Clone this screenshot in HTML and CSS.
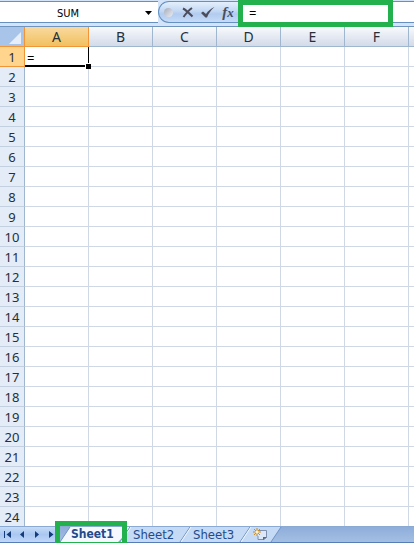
FILE: index.html
```html
<!DOCTYPE html>
<html lang="en">
<head>
    <meta charset="UTF-8">
    <meta name="viewport" content="width=device-width, initial-scale=1.0">
    <title>Spreadsheet</title>
    <link rel="stylesheet" href="styles.css">
    <script src="script.js" defer></script>
</head>
<body>

<div class="formula-bar">
    <div class="name-box">
        <select class="name-select" aria-label="Function">
            <option>SUM</option>
        </select>
        <svg class="name-arrow" width="7" height="4" viewBox="0 0 7 4"><path d="M0 0h7L3.500 4z" fill="#000"/></svg>
    </div>
    <div class="formula-tools">
        <span class="knob"></span>
        <button type="button" aria-label="Cancel">
            <svg width="12" height="11" viewBox="0 0 12 11"><path d="M1 1.500C4 3 7 6 10.500 9.500M10 1C7 3 4 6.500 1.500 10" fill="none" stroke="#4c4c5c" stroke-width="2"/></svg>
        </button>
        <button type="button" aria-label="Enter">
            <svg width="14" height="11" viewBox="0 0 14 11"><path d="M0 6l2-1.500 3 2.500C7 4 10 1.500 13.500 0 10 3 7.500 6.500 6 10.500H4.500z" fill="#4c4c5c"/></svg>
        </button>
        <button type="button" class="fx" aria-label="Insert function">f<small>x</small></button>
    </div>
    <div class="formula-field">
        <input type="text" class="formula-input" aria-label="Formula" value="=">
        <span class="mark mark-formula"></span>
    </div>
</div>

<div class="sheet">
    <table>
        <thead>
            <tr>
                <th class="corner"><svg width="12" height="12" viewBox="0 0 12 12"><path d="M12 0v12H0z" fill="#e6eefa"/></svg></th>
                <th class="active">A</th>
                <th>B</th>
                <th>C</th>
                <th>D</th>
                <th>E</th>
                <th>F</th>
                <th></th>
            </tr>
        </thead>
        <tbody id="gridBody"></tbody>
    </table>
</div>

<div class="tab-bar">
    <div class="tab-nav">
        <button type="button" aria-label="First sheet"><svg width="9" height="7" viewBox="0 0 9 7"><path d="M1 0h1v7H1zM8 0v7L3.500 3.500z" fill="#123c7c"/></svg></button>
        <button type="button" aria-label="Previous sheet"><svg width="9" height="7" viewBox="0 0 9 7"><path d="M6 0v7L2 3.500z" fill="#123c7c"/></svg></button>
        <button type="button" aria-label="Next sheet"><svg width="9" height="7" viewBox="0 0 9 7"><path d="M2 0v7l4-3.500z" fill="#123c7c"/></svg></button>
        <button type="button" aria-label="Last sheet"><svg width="9" height="7" viewBox="0 0 9 7"><path d="M1 0v7l4.500-3.500zM7 0h1v7H7z" fill="#123c7c"/></svg></button>
    </div>
    <button type="button" class="tab tab-active">
        <svg class="tab-shape" viewBox="0 0 70 15"><path class="fill" d="M0 15L10 0h60L60 15z"/><path class="edge" d="M0 15L10 0"/><path class="fold" d="M63 10v5h-5z"/></svg>
        <span>Sheet1</span>
    </button>
    <button type="button" class="tab">
        <svg class="tab-shape" viewBox="0 0 70 15"><path class="fill" d="M0 15L10 0h60L60 15z"/><path class="edge" d="M0 15L10 0"/><path class="shine" d="M1 15L11 0"/></svg>
        <span>Sheet2</span>
    </button>
    <button type="button" class="tab">
        <svg class="tab-shape" viewBox="0 0 70 15"><path class="fill" d="M0 15L10 0h60L60 15z"/><path class="edge" d="M0 15L10 0"/><path class="shine" d="M1 15L11 0"/></svg>
        <span>Sheet3</span>
    </button>
    <button type="button" class="tab tab-new" aria-label="Insert sheet">
        <svg class="tab-shape" viewBox="0 0 40 15"><path class="fill" d="M0 15L10 0h31L31 15z"/><path class="edge" d="M0 15L10 0M31 15L41 0"/><path class="shine" d="M1 15L11 0"/></svg>
        <svg class="new-icon" width="15" height="13" viewBox="0 0 15 13">
            <path d="M5 3h9v7l-2 2H5z" fill="#dce8f8"/>
            <path d="M6 2.500h7.500v7L11 11.500H5V8" fill="none" stroke="#7f8fac"/>
            <path d="M10 12V9h4z" fill="#56698c"/>
            <path d="M4 0v8M0 4h8M1 1l6 6M7 1L1 7" stroke="#c98a2c"/>
            <circle cx="4" cy="4" r="1.500" fill="#fff3c0"/>
        </svg>
    </button>
    <span class="mark mark-tab"></span>
</div>

</body>
</html>
```
FILE: styles.css
```css
* {
    box-sizing: border-box;
}
body {
    display: flex;
    flex-direction: column;
    height: 100vh;
    margin: 0;
    overflow: hidden;
    background-color: #fff;
    font-family: "Noto Sans", "Liberation Sans", sans-serif;
    font-size: 13px;
    color: #262f3b;
}
button {
    padding: 0;
    border: 0;
    background: none;
    font: inherit;
    color: inherit;
}
svg {
    display: block;
}

/* formula bar */
.formula-bar {
    display: flex;
    flex: none;
    height: 27px;
    padding: 1px 0 3px;
    background-color: #d3e4f9;
    border-bottom: 1px solid #6f94bd;
}
.name-box, .formula-field {
    position: relative;
    border-top: 1px solid #6590bf;
    border-bottom: 1px solid #6590bf;
    background-color: #fff;
}
.name-box {
    flex: none;
    width: 158px;
}
.name-select {
    display: block;
    width: 100%;
    height: 100%;
    padding: 2px 22px 0 0;
    border: 0;
    appearance: none;
    background: none;
    font: 11px "DejaVu Sans Condensed", "DejaVu Sans", sans-serif;
    color: #000;
    text-align: center;
    text-align-last: center;
}
.name-arrow {
    position: absolute;
    top: 9px;
    right: 6px;
}
.formula-tools {
    display: flex;
    flex: none;
    align-items: center;
    width: 80px;
    border: 1px solid #6590bf;
    border-right: 0;
    border-radius: 11px 0 0 11px;
    background: linear-gradient(#e4effc, #c3d8f4 45%, #b1cbef 60%, #c6dcf8);
}
.formula-tools button {
    display: flex;
    justify-content: center;
    width: 21px;
}
.knob {
    width: 9px;
    height: 9px;
    margin: 0 6px 0 5px;
    border-radius: 50%;
    background: linear-gradient(135deg, #a5abb9, #eceef3);
}
.formula-tools .fx {
    align-items: baseline;
    font: italic bold 15px/18px "Liberation Serif", serif;
    color: #4c4c5c;
}
.fx small {
    font-size: 13px;
}
.formula-field {
    flex: 1;
}
.formula-input {
    width: 100%;
    height: 100%;
    padding: 2px 11px 0;
    border: 0;
    outline: 0;
    background: none;
    font: inherit;
    color: #000;
}

/* green highlight frames */
.mark {
    position: absolute;
    border: 5px solid #22b14c;
    pointer-events: none;
}
.mark-formula {
    top: -2px;
    left: 0;
    width: 155px;
    height: 27px;
    z-index: 1;
}
.mark-tab {
    top: -6px;
    left: 55px;
    width: 72px;
    height: 26px;
}

/* grid */
.sheet {
    flex: 1;
    min-height: 0;
    overflow: hidden;
}
table {
    width: 473px;
    table-layout: fixed;
    border-collapse: separate;
    border-spacing: 0;
}
th, td {
    width: 64px;
    height: 20px;
    padding: 1px 0 0;
    border-right: 1px solid #d0d7e5;
    border-bottom: 1px solid #d0d7e5;
    line-height: 18px;
}
th {
    font-weight: normal;
    text-align: center;
}
thead th {
    border-right-color: #9eb6ce;
    border-bottom-color: #9eb6ce;
    background: linear-gradient(#f8fafc, #e5eaf2 50%, #d3dbe9);
    font-size: 14px;
}
thead .active {
    border-right-color: #f29536;
    border-bottom-color: #f29536;
    background: linear-gradient(#f9d99f, #f1c15f);
}
thead .corner {
    width: 25px;
    padding: 2px 4px 0 9px;
    border-color: #9eb6ce;
    border-bottom-color: #f29536;
    border-right-color: #f29536;
    background: #a9c4e9;
}
tbody th {
    border-right-color: #9eb6ce;
    border-bottom-color: #c3d0e0;
    background-color: #e4ecf7;
}
tbody .active {
    border-right-color: #f29536;
    border-bottom-color: #f29536;
    background-color: #ffd58d;
}
.editing {
    position: relative;
    padding-left: 2px;
    border-right-color: #000;
    border-bottom: 2px solid #000;
    color: #000;
}
.editing input {
    display: block;
    width: 100%;
    height: 17px;
    padding: 2px 0 0;
    border: 0;
    outline: 0;
    background: none;
    font: inherit;
    color: inherit;
}
/* fill handle */
.editing::after {
    content: "";
    position: absolute;
    right: -3px;
    bottom: -4px;
    width: 5px;
    height: 5px;
    border-top: 1px solid #fff;
    border-left: 1px solid #fff;
    background-color: #000;
    box-sizing: content-box;
    z-index: 1;
}

/* sheet tabs */
.tab-bar {
    position: relative;
    display: flex;
    flex: none;
    height: 17px;
    border-top: 1px solid #8aa9d3;
    border-bottom: 1px solid #567db5;
    background: linear-gradient(#8eadda, #a5bfe3);
}
.tab-nav {
    display: flex;
    width: 60px;
    background: linear-gradient(#c6dcf8, #a9c7f0 50%, #c0d8f8);
}
.tab-nav button {
    display: flex;
    flex: 1;
    align-items: center;
    justify-content: center;
}
.tab {
    position: relative;
    width: 60px;
    padding-left: 13px;
    font: 13px/15px "DejaVu Sans Condensed", "DejaVu Sans", sans-serif;
    color: #234a8b;
    text-align: left;
    white-space: nowrap;
}
.tab span {
    position: relative;
}
.tab-shape {
    position: absolute;
    top: 0;
    left: 0;
    width: 70px;
    height: 15px;
    overflow: visible;
}
.tab-shape .fill {
    fill: #c5daf4;
}
.tab-shape .edge {
    fill: none;
    stroke: #6f93c6;
}
.tab-shape .shine {
    fill: none;
    stroke: #f2f8ff;
}
.tab-shape .fold {
    fill: #8daad2;
}
.tab-active {
    padding-left: 11px;
    font-size: 12px;
    font-weight: bold;
}
.tab-active .fill {
    fill: #f5f9ff;
}
.tab-new {
    width: 31px;
}
.tab-new .tab-shape {
    width: 40px;
}
.new-icon {
    position: relative;
}
```
FILE: script.js
```js
const gridBody = document.getElementById('gridBody');

for (let row = 1; row <= 24; row++) {
    const tr = document.createElement('tr');
    tr.innerHTML = `<th class="${row === 1 ? 'active' : ''}">${row}</th>` + '<td></td>'.repeat(7);
    gridBody.appendChild(tr);
}

// cell A1 is being edited
const cell = gridBody.rows[0].cells[1];
cell.className = 'editing';
cell.innerHTML = '<input type="text" aria-label="A1" value="=">';
```
